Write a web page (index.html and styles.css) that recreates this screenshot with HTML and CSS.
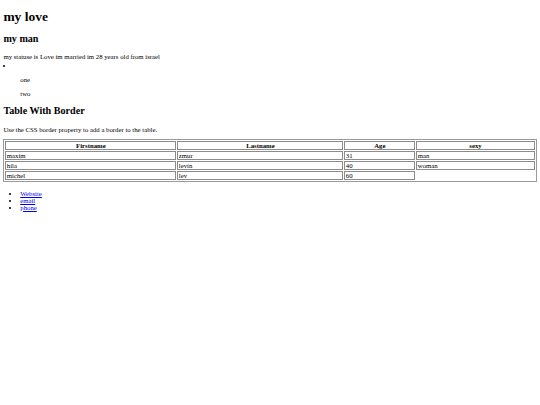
FILE: index.html
```html
<!DOCTYPE html>
<html>
<head>
<meta charset="utf-8">
<title>my love</title>
<link rel="stylesheet" href="styles.css">
</head>
<body>
<h1 class="title">my love</h1>
<h2 class="subtitle subtitle-first">my man</h2>
<p class="status">my statuse is Love im married im 28 years old from israel</p>
<ul class="mood">
  <li class="mood-item">
    <div class="mood-notes">
      <p class="note">one</p>
      <p class="note">two</p>
    </div>
  </li>
</ul>
<h2 class="subtitle">Table With Border</h2>
<p class="text">Use the CSS border property to add a border to the table.</p>
<table class="people">
  <colgroup>
    <col class="col-first">
    <col class="col-last">
    <col class="col-age">
    <col class="col-sexy">
  </colgroup>
  <tr>
    <th>Firstname</th>
    <th>Lastname</th>
    <th>Age</th>
    <th>sexy</th>
  </tr>
  <tr>
    <td>maxim</td>
    <td>zmur</td>
    <td>31</td>
    <td>man</td>
  </tr>
  <tr>
    <td>hila</td>
    <td>levin</td>
    <td>40</td>
    <td>woman</td>
  </tr>
  <tr>
    <td>michel</td>
    <td>lev</td>
    <td>60</td>
  </tr>
</table>
<ul class="links">
  <li><a class="link" href="#">Website</a></li>
  <li><a class="link" href="#">email</a></li>
  <li><a class="link" href="#">phone</a></li>
</ul>
</body>
</html>
```

FILE: styles.css
```css
html {
  background: #ffffff;
}

body {
  margin: 3.375px;
  font-family: "Liberation Serif", "Times New Roman", serif;
  font-size: 6.75px;
  color: #000000;
}

.title {
  font-size: 13.5px;
  font-weight: bold;
  margin: 6px 0 7.5px;
}

.subtitle {
  font-size: 10.125px;
  font-weight: bold;
  margin: 8.4px 0;
}

.subtitle-first {
  margin-top: 7.5px;
  margin-bottom: 9px;
}

.status {
  margin: 0;
}

.text {
  margin: 9.4px 0 6.75px;
}

.mood {
  list-style: disc inside;
  margin: 0;
  padding: 0;
}

.mood-item {
  padding-top: 2px;
}

.mood-notes {
  padding-left: 16.875px;
}

.note {
  margin: 6.75px 0 7.25px;
}

.subtitle-table {
  margin-top: 9px;
}

.people {
  width: 100%;
  table-layout: fixed;
  border: 1px solid #9a9a9a;
  border-spacing: 1px;
  margin: 0;
}

.col-first {
  width: 171px;
}

.col-last {
  width: 166px;
}

.col-age {
  width: 71px;
}

.people th,
.people td {
  border: 1px solid #8c8c8c;
  padding: 0 0.4px;
  line-height: 7px;
}

.people th {
  font-weight: bold;
  text-align: center;
}

.people td {
  text-align: left;
}

.links {
  margin: 7.5px 0;
  padding-left: 16.875px;
}

.link {
  color: #0000ee;
  text-decoration: underline;
}
```
